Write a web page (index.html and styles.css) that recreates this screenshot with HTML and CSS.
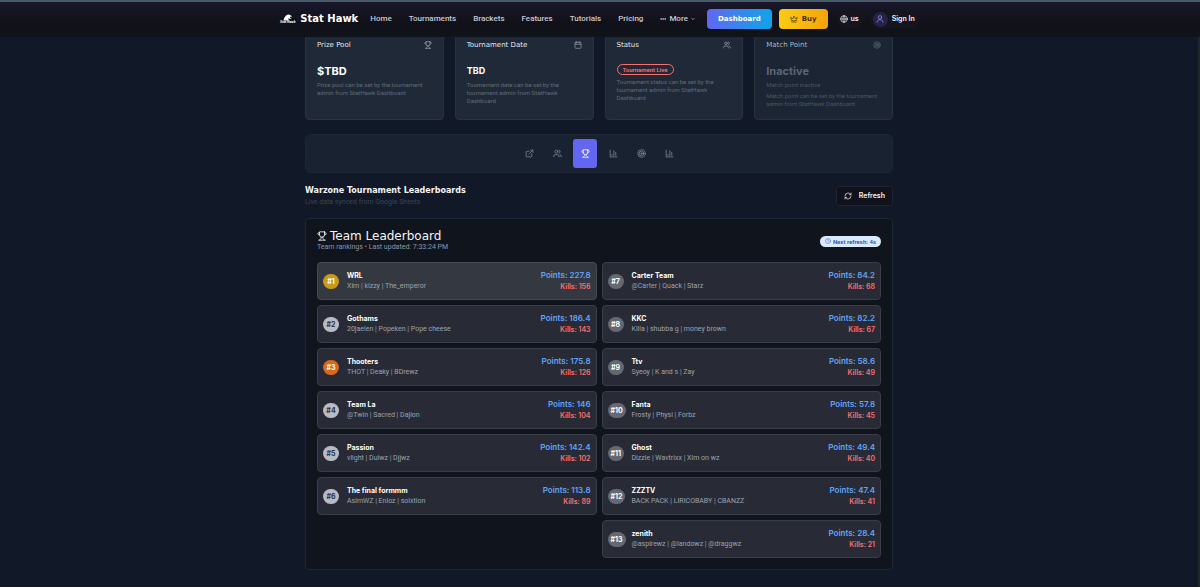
FILE: index.html
```
<!DOCTYPE html>
<html lang="en">
  <head>
    <title>Stat Hawk - Warzone Tournament</title>
    <meta charset="utf-8">
    <meta name="viewport" content="width=device-width, initial-scale=1.0">
    <link rel="stylesheet" href="styles.css">
  </head>
  <body>
    <svg class="sprite" aria-hidden="true">
      <symbol id="trophy" viewBox="0 0 24 24">
        <path d="M6 9H4.5a2.5 2.5 0 0 1 0-5H6M18 9h1.500a2.500 2.500 0 0 0 0-5H18M4 22h16M10 14.660V17c0 .55-.47.98-.97 1.210C7.850 18.750 7 20.240 7 22M14 14.660V17c0 .55.47.98.97 1.210C16.150 18.750 17 20.240 17 22M18 2H6v7a6 6 0 0 0 12 0V2Z"/>
      </symbol>
      <symbol id="calendar" viewBox="0 0 24 24">
        <path d="M8 2v4M16 2v4M3 10h18"/><rect x="3" y="4" width="18" height="18" rx="2"/>
      </symbol>
      <symbol id="users" viewBox="0 0 24 24">
        <path d="M16 21v-2a4 4 0 0 0-4-4H6a4 4 0 0 0-4 4v2M22 21v-2a4 4 0 0 0-3-3.870M16 3.130a4 4 0 0 1 0 7.750"/><circle cx="9" cy="7" r="4"/>
      </symbol>
      <symbol id="target" viewBox="0 0 24 24">
        <circle cx="12" cy="12" r="10"/><circle cx="12" cy="12" r="6"/><circle cx="12" cy="12" r="2"/>
      </symbol>
      <symbol id="external" viewBox="0 0 24 24">
        <path d="M15 3h6v6M10 14 21 3M18 13v6a2 2 0 0 1-2 2H5a2 2 0 0 1-2-2V8a2 2 0 0 1 2-2h6"/>
      </symbol>
      <symbol id="chart" viewBox="0 0 24 24">
        <path d="M3 3v18h18M8 17v-3M13 17V5M18 17V9"/>
      </symbol>
      <symbol id="refresh" viewBox="0 0 24 24">
        <path d="M3 12a9 9 0 0 1 9-9 9.750 9.750 0 0 1 6.740 2.740L21 8M21 3v5h-5M21 12a9 9 0 0 1-9 9 9.750 9.750 0 0 1-6.740-2.740L3 16M8 16H3v5"/>
      </symbol>
      <symbol id="clock" viewBox="0 0 24 24">
        <circle cx="12" cy="12" r="10"/><path d="M12 6v6l4 2"/>
      </symbol>
      <symbol id="crown" viewBox="0 0 24 24">
        <path d="M12 4l4 7 6-4-3 10H5L2 7l6 4zM5 21h14"/>
      </symbol>
      <symbol id="globe" viewBox="0 0 24 24">
        <circle cx="12" cy="12" r="10"/><path d="M2 12h20M12 2c5 5.500 5 14.500 0 20M12 2c-5 5.500-5 14.500 0 20"/>
      </symbol>
      <symbol id="user" viewBox="0 0 24 24">
        <circle cx="12" cy="7" r="5"/><path d="M3 22c0-5 4-8 9-8s9 3 9 8"/>
      </symbol>
      <symbol id="dots" viewBox="0 0 24 24">
        <circle cx="4" cy="12" r="1"/><circle cx="12" cy="12" r="1"/><circle cx="20" cy="12" r="1"/>
      </symbol>
      <symbol id="down" viewBox="0 0 24 24">
        <path d="m5 9 7 7 7-7"/>
      </symbol>
    </svg>

    <header class="header">
      <a class="brand" href="#">
        <span class="brand__mark">
          <svg class="brand__bird" viewBox="0 0 24 18" aria-hidden="true">
            <path d="M1 17C3 8 8 2 14 1c5 0 9 3 9 7l-4-2c-1 3 1 5 4 7-4 0-7-1-9-3 0 3 1 5 3 7z"/>
          </svg>
          <span class="brand__tiny">Stat Hawk</span>
        </span>
        <span class="brand__name">Stat Hawk</span>
      </a>
      <nav class="nav">
        <a href="#">Home</a>
        <a href="#">Tournaments</a>
        <a href="#">Brackets</a>
        <a href="#">Features</a>
        <a href="#">Tutorials</a>
        <a href="#">Pricing</a>
        <button class="more" type="button"><svg class="icon icon--tiny icon--heavy"><use href="#dots"/></svg>More<svg class="icon icon--mini icon--heavy"><use href="#down"/></svg></button>
      </nav>
      <div class="actions">
        <a class="btn btn--dashboard" href="#">Dashboard</a>
        <a class="btn btn--buy" href="#"><svg class="icon icon--small"><use href="#crown"/></svg>Buy</a>
        <button class="pill pill--lang" type="button"><svg class="icon icon--small"><use href="#globe"/></svg>us</button>
        <a class="pill pill--user" href="#"><span class="avatar"><svg class="icon icon--small"><use href="#user"/></svg></span>Sign In</a>
      </div>
    </header>

    <main class="wrapper">
      <section class="cards">
        <article class="card">
          <h3 class="card__title">Prize Pool <svg class="icon icon--small"><use href="#trophy"/></svg></h3>
          <p class="card__value card__value--big">$TBD</p>
          <p class="card__text">Prize pool can be set by the tournament admin from StatHawk Dashboard</p>
        </article>
        <article class="card">
          <h3 class="card__title">Tournament Date <svg class="icon icon--small"><use href="#calendar"/></svg></h3>
          <p class="card__value">TBD</p>
          <p class="card__text">Tournament date can be set by the tournament admin from StatHawk Dashboard</p>
        </article>
        <article class="card">
          <h3 class="card__title">Status <svg class="icon icon--small"><use href="#users"/></svg></h3>
          <p class="card__live">Tournament Live</p>
          <p class="card__text">Tournament status can be set by the tournament admin from StatHawk Dashboard</p>
        </article>
        <article class="card card--inactive">
          <h3 class="card__title">Match Point <svg class="icon icon--small"><use href="#target"/></svg></h3>
          <p class="card__value card__value--big">Inactive</p>
          <p class="card__text">Match point inactive</p>
          <p class="card__text">Match point can be set by the tournament admin from StatHawk Dashboard</p>
        </article>
      </section>

      <nav class="tabs">
        <button class="tab" type="button" aria-label="Links"><svg class="icon"><use href="#external"/></svg></button>
        <button class="tab" type="button" aria-label="Teams"><svg class="icon"><use href="#users"/></svg></button>
        <button class="tab tab--active" type="button" aria-label="Leaderboards"><svg class="icon"><use href="#trophy"/></svg></button>
        <button class="tab" type="button" aria-label="Stats"><svg class="icon"><use href="#chart"/></svg></button>
        <button class="tab" type="button" aria-label="Match point"><svg class="icon"><use href="#target"/></svg></button>
        <button class="tab" type="button" aria-label="Charts"><svg class="icon"><use href="#chart"/></svg></button>
      </nav>

      <div class="heading">
        <div>
          <h1>Warzone Tournament Leaderboards</h1>
          <p class="heading__sub">Live data synced from Google Sheets</p>
        </div>
        <button class="refresh" type="button"><svg class="icon icon--small"><use href="#refresh"/></svg>Refresh</button>
      </div>

      <section class="board">
        <div class="board__head">
          <div>
            <h2><svg class="icon icon--large"><use href="#trophy"/></svg>Team Leaderboard</h2>
            <p class="board__sub">Team rankings • Last updated: 7:33:24 PM</p>
          </div>
          <span class="next"><svg class="icon icon--tiny"><use href="#clock"/></svg>Next refresh: 4s</span>
        </div>
        <div class="board__columns">
          <ol class="teams" id="teams-left"></ol>
          <ol class="teams" id="teams-right"></ol>
        </div>
      </section>
    </main>

    <template id="team-row">
      <li class="team">
        <span class="team__rank"></span>
        <div class="team__info">
          <p class="team__name"></p>
          <p class="team__players"></p>
        </div>
        <div class="team__score">
          <p class="team__points"></p>
          <p class="team__kills"></p>
        </div>
      </li>
    </template>

    <script>
      const teams = [
        ['WRL', 'Xim | kizzy | The_emperor', '227.8', 156],
        ['Gothams', '20jaelen | Popeken | Pope cheese', '186.4', 143],
        ['Thooters', 'THOT | Deaky | BDrewz', '175.8', 126],
        ['Team La', '@Twin | Sacred | Dajion', '146', 104],
        ['Passion', 'vlight | Dulwz | Djjwz', '142.4', 102],
        ['The final formmm', 'AsimWZ | Enloz | solxtion', '113.8', 89],
        ['Carter Team', '@Carter | Quack | Starz', '84.2', 68],
        ['KKC', 'Killa | shubba g | money brown', '82.2', 67],
        ['Ttv', 'Syeoy | K and s | Zay', '58.6', 49],
        ['Fanta', 'Frosty | Physi | Forbz', '57.8', 45],
        ['Ghost', 'Dizzie | Wavtrixx | Xim on wz', '49.4', 40],
        ['ZZZTV', 'BACK PACK | LIRICOBABY | CBANZZ', '47.4', 41],
        ['zenith', '@aspirewz | @landowz | @draggwz', '28.4', 21]
      ];

      const tmpl = document.getElementById('team-row');
      const half = Math.floor(teams.length / 2);

      teams.forEach(([name, players, points, kills], i) => {
        const clone = tmpl.content.cloneNode(true);
        const row = clone.querySelector('.team');
        if (i == 0) row.classList.add('team--first');
        if (i == 2) row.classList.add('team--third');
        if (i >= half) row.classList.add('team--lower');
        clone.querySelector('.team__rank').innerText = '#' + (i + 1);
        clone.querySelector('.team__name').innerText = name;
        clone.querySelector('.team__players').innerText = players;
        clone.querySelector('.team__points').innerText = 'Points: ' + points;
        clone.querySelector('.team__kills').innerText = 'Kills: ' + kills;
        document.getElementById(i < half ? 'teams-left' : 'teams-right').appendChild(clone);
      });
    </script>
  </body>
</html>
```
FILE: styles.css
```
:root {
  --gap: 11px;
  --display: "DejaVu Sans", sans-serif;
  --small: Roboto, sans-serif;
  --muted: #9ca3af;
}

* {
  box-sizing: border-box;
}

body {
  margin: 0;
  min-height: 100vh;
  background-color: #111827;
  border-right: 2px solid #22252b;
  font-family: Inter, sans-serif;
  font-size: 7px;
  line-height: 10px;
  color: #f3f4f6;
}

h1, h2, h3, p, ol {
  margin: 0;
  padding: 0;
}

a {
  color: inherit;
  text-decoration: none;
}

button {
  font: inherit;
  color: inherit;
  background: none;
  border: 0;
  padding: 0;
  cursor: pointer;
}

.sprite {
  display: none;
}

.icon {
  width: 9px;
  height: 9px;
  flex: none;
  fill: none;
  stroke: currentColor;
  stroke-width: 2;
  stroke-linecap: round;
  stroke-linejoin: round;
}

.icon--large {
  width: 10px;
  height: 10px;
}

.icon--small {
  width: 8px;
  height: 8px;
}

.icon--tiny {
  width: 6px;
  height: 6px;
}

.icon--mini {
  width: 4px;
  height: 4px;
}

.icon--heavy {
  stroke-width: 4;
}

/* header */
.header {
  position: fixed;
  top: 0;
  left: 0;
  right: 0;
  z-index: 10;
  display: flex;
  align-items: center;
  justify-content: center;
  gap: 12px;
  padding: 7px 0 8px;
  border-top: 2px solid #485c68;
  background: linear-gradient(#18172b, #111119 60%, #10131a);
}

.brand {
  display: flex;
  align-items: center;
  gap: 5px;
}

.brand__mark {
  display: flex;
  flex-direction: column;
  align-items: center;
  width: 15px;
}

.brand__bird {
  width: 9px;
  height: 7px;
  fill: #fff;
}

.brand__tiny {
  font-size: 3px;
  line-height: 3px;
  font-weight: 800;
  font-style: italic;
  white-space: nowrap;
}

.brand__name {
  font-family: var(--display);
  font-size: 10px;
  font-weight: 700;
  color: #fff;
}

.nav {
  display: flex;
  align-items: center;
  gap: 17px;
  font-family: var(--small);
  font-size: 8px;
  font-weight: 500;
  color: #c6c9d1;
}

.more {
  display: flex;
  align-items: center;
  gap: 3px;
}

.actions {
  display: flex;
  align-items: center;
  gap: 7px;
}

.btn {
  display: flex;
  align-items: center;
  justify-content: center;
  gap: 4px;
  height: 20px;
  padding: 0 11px;
  border-radius: 4px;
  font-family: var(--display);
  font-size: 7px;
  font-weight: 700;
}

.btn--dashboard {
  color: #fff;
  background: linear-gradient(90deg, #6366f1, #0ea5e9);
}

.btn--buy {
  color: #4a3208;
  background: linear-gradient(90deg, #facc15, #f5a30b);
}

.pill {
  display: flex;
  align-items: center;
  gap: 3px;
  height: 18px;
  padding: 0 4px;
  border-radius: 9px;
  font-weight: 600;
  background-color: #14151d;
}

.pill--lang {
  margin-left: 1px;
}

.pill--user {
  padding: 0 5px 0 3px;
  gap: 4px;
}

.avatar {
  display: flex;
  align-items: center;
  justify-content: center;
  width: 15px;
  height: 15px;
  border-radius: 50%;
  color: #a5a8e0;
  background-color: #24224a;
}

/* content */
.wrapper {
  max-width: 588px;
  margin: 0 auto;
  padding: 28px 0 16px;
}

.cards {
  display: grid;
  grid-template-columns: repeat(4, minmax(0, 1fr));
  gap: var(--gap);
}

.card {
  min-height: 92px;
  padding: 11px var(--gap) 8px;
  border: 1px solid #283341;
  border-radius: 4px;
  background-color: #1f2937;
}

.card__title {
  display: flex;
  justify-content: space-between;
  align-items: center;
  margin-bottom: 14px;
  font-family: var(--display);
  font-size: 7px;
  line-height: 10px;
  font-weight: 400;
  color: #e5e7eb;
}

.card__title .icon {
  color: var(--muted);
}

.card__value {
  margin-bottom: 3px;
  font-size: 9px;
  line-height: 14px;
  font-weight: 700;
  color: #fff;
}

.card__value--big {
  font-size: 11px;
}

.card__text {
  font-family: var(--small);
  font-size: 6px;
  line-height: 8px;
  color: #616b7a;
}

.card__live {
  display: table;
  margin: 1px 0 3px;
  padding: 0 5px;
  border: 1px solid #f87171;
  border-radius: 6px;
  font-family: var(--small);
  font-size: 6px;
  line-height: 9px;
  font-weight: 600;
  color: #f87171;
}

.card--inactive {
  background-color: #1b2533;
}

.card--inactive .card__title {
  color: #b0b5bd;
}

.card--inactive .icon,
.card--inactive .card__value {
  color: #5c6674;
}

.card--inactive .card__text {
  color: #4c5666;
}

.card--inactive .card__text + .card__text {
  margin-top: 3px;
}

.tabs {
  display: flex;
  justify-content: center;
  gap: 4px;
  margin-top: 14px;
  padding: 4px;
  border: 1px solid #1d2735;
  border-radius: 6px;
  background-color: #182230;
}

.tab {
  display: flex;
  align-items: center;
  justify-content: center;
  width: 24px;
  height: 29px;
  border-radius: 3px;
  color: #858d99;
}

.tab--active {
  color: #fff;
  background-color: #6366f1;
}

.heading {
  display: flex;
  align-items: center;
  justify-content: space-between;
  margin-top: 12px;
}

h1 {
  font-family: var(--display);
  font-size: 8px;
  line-height: 12px;
  font-weight: 700;
}

.heading__sub {
  font-family: var(--small);
  color: #3b4555;
}

.refresh {
  display: flex;
  align-items: center;
  gap: 7px;
  height: 20px;
  padding: 0 7px;
  border: 1px solid #1f2534;
  border-radius: 3px;
  background-color: #10131b;
  font-weight: 600;
}

.board {
  margin-top: 11px;
  padding: var(--gap);
  border: 1px solid #1e2736;
  border-radius: 4px;
  background-color: #10141d;
}

.board__head {
  display: flex;
  align-items: center;
  justify-content: space-between;
  margin-bottom: 10px;
}

h2 {
  display: flex;
  align-items: center;
  gap: 3px;
  font-family: var(--display);
  font-size: 12px;
  line-height: 12px;
  font-weight: 400;
}

.board__sub {
  font-family: var(--small);
  color: #8f96a3;
}

.next {
  display: flex;
  align-items: center;
  gap: 2px;
  padding: 0 5px;
  border-radius: 6px;
  font-family: var(--small);
  font-size: 6px;
  line-height: 11px;
  font-weight: 700;
  color: #3b59b5;
  background-color: #dbeafe;
}

.board__columns {
  display: grid;
  grid-template-columns: repeat(2, minmax(0, 1fr));
  gap: 5px;
}

.teams {
  display: flex;
  flex-direction: column;
  gap: 5px;
  list-style-type: none;
}

.team {
  display: grid;
  grid-template-columns: 20px 1fr auto;
  align-items: center;
  gap: 4px;
  padding: 6px 5px;
  border: 1px solid #3a3e47;
  border-radius: 4px;
  background-color: #282b35;
}

.team--first {
  border-color: #454a52;
  background-color: #343840;
}

.team__rank {
  justify-self: start;
  min-width: 16px;
  padding: 0 3px;
  border-radius: 8px;
  font-size: 7px;
  line-height: 15px;
  font-weight: 700;
  text-align: center;
  color: #2b303b;
  background-color: #b8bbc6;
}

.team--first .team__rank {
  color: #fff;
  background-color: #c99a16;
}

.team--third .team__rank {
  color: #fff;
  background-color: #d9681f;
}

.team--lower .team__rank {
  color: #fff;
  background-color: #636873;
}

.team__name {
  font-weight: 700;
  color: #fff;
}

.team__players {
  font-family: var(--small);
  color: var(--muted);
}

.team__score {
  text-align: right;
}

.team__points {
  font-size: 8px;
  line-height: 12px;
  font-weight: 600;
  color: #60a5fa;
}

.team__kills {
  line-height: 12px;
  font-weight: 600;
  color: #f87171;
}
```
